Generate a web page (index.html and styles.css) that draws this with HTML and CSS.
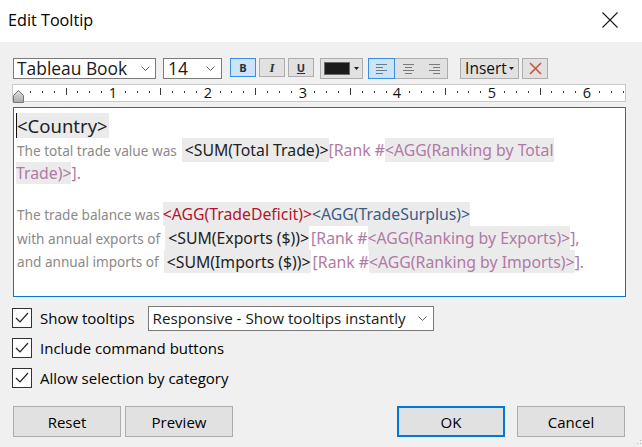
FILE: index.html
```html
<!DOCTYPE html>
<html>
<head>
<meta charset="utf-8">
<link rel="stylesheet" href="styles.css">
</head>
<body>
<div class="dialog">
  <header class="titlebar">
    <span class="title">Edit Tooltip</span>
    <svg class="close" width="16" height="16" viewBox="0 0 16 16"><path d="M0.5 0.5L15.5 15.5M15.5 0.5L0.5 15.5" stroke="#1a1a1a" stroke-width="1.1" fill="none"/></svg>
  </header>
  <main class="main">
    <div class="toolbar">
      <div class="select font-select"><span>Tableau Book</span><svg width="9" height="5" viewBox="0 0 9 5"><path d="M0.5 0.5L4.5 4.5L8.5 0.5" fill="none" stroke="#606060"/></svg></div>
      <div class="select size-select"><span>14</span><svg width="9" height="5" viewBox="0 0 9 5"><path d="M0.5 0.5L4.5 4.5L8.5 0.5" fill="none" stroke="#606060"/></svg></div>
      <div class="tbtn fmt active b-btn">B</div>
      <div class="tbtn fmt i-btn">I</div>
      <div class="tbtn fmt u-btn">U</div>
      <div class="tbtn color-btn"><span class="swatch"></span><svg width="5" height="3" viewBox="0 0 5 3"><path d="M0 0H5L2.5 3Z" fill="#222"/></svg></div>
      <div class="align-group">
        <div class="align-seg active"><svg width="11" height="11" viewBox="0 0 11 11"><path d="M0 1.5H11M0 4.5H7M0 7.5H11M0 10.5H7" stroke="#6b7a8a"/></svg></div>
        <div class="align-seg"><svg width="11" height="11" viewBox="0 0 11 11"><path d="M0 1.5H11M2 4.5H9M0 7.5H11M2 10.5H9" stroke="#7a7a7a"/></svg></div>
        <div class="align-seg"><svg width="11" height="11" viewBox="0 0 11 11"><path d="M0 1.5H11M4 4.5H11M0 7.5H11M4 10.5H11" stroke="#7a7a7a"/></svg></div>
      </div>
      <div class="tbtn insert-btn"><span>Insert</span><svg width="5" height="3" viewBox="0 0 5 3"><path d="M0 0H5L2.5 3Z" fill="#222"/></svg></div>
      <div class="tbtn del-btn"><svg width="13" height="13" viewBox="0 0 13 13"><path d="M1 1L12 12M12 1L1 12" stroke="#c9553f" stroke-width="1.6" fill="none"/></svg></div>
    </div>

    <div class="ruler">
      <svg class="ruler-scale" width="612" height="16" viewBox="0 0 612 16">
        <path stroke="#3a3a3a" stroke-width="1" fill="none" d="M17.5 6v2M29.5 6v2M41.5 6v2M64.5 6v2M76.5 6v2M88.5 6v2M112.5 6v2M124.5 6v2M136.5 6v2M159.5 6v2M171.5 6v2M183.5 6v2M207.5 6v2M218.5 6v2M230.5 6v2M254.5 6v2M266.5 6v2M278.5 6v2M301.5 6v2M313.5 6v2M325.5 6v2M349.5 6v2M361.5 6v2M373.5 6v2M396.5 6v2M408.5 6v2M420.5 6v2M444.5 6v2M455.5 6v2M467.5 6v2M491.5 6v2M503.5 6v2M515.5 6v2M538.5 6v2M550.5 6v2M562.5 6v2M586.5 6v2M598.5 6v2M610.5 6v2"/>
        <path stroke="#3a3a3a" stroke-width="1" fill="none" d="M53.5 3v7M147.5 3v7M242.5 3v7M337.5 3v7M432.5 3v7M527.5 3v7"/>
        <g class="ruler-num" text-anchor="middle">
          <text x="100" y="12.5">1</text>
          <text x="195" y="12.5">2</text>
          <text x="290" y="12.5">3</text>
          <text x="384" y="12.5">4</text>
          <text x="479" y="12.5">5</text>
          <text x="574" y="12.5">6</text>
        </g>
      </svg>
      <svg class="indent-marker" width="11" height="13" viewBox="0 0 11 13">
        <defs><linearGradient id="mk" x1="0" y1="0" x2="0" y2="1"><stop offset="0" stop-color="#e2e2e2"/><stop offset="1" stop-color="#a9a9a9"/></linearGradient></defs>
        <path d="M5.5 0.5L10.5 5.5V12.5H0.5V5.5Z" fill="url(#mk)" stroke="#767676"/>
      </svg>
    </div>

    <div class="editor">
      <div class="line l1"><span class="caret"></span><span class="fld big">&lt;Country&gt;</span></div>
      <div class="line l2"><span class="lbl gap">The total trade value was</span><span class="fld pad">&lt;SUM(Total Trade)&gt;</span><span class="pur">[Rank #</span><span class="fld pur">&lt;AGG(Ranking by Total</span></div>
      <div class="line l3"><span class="fld pur">Trade)&gt;</span><span class="pur">].</span></div>
      <div class="line l4"></div>
      <div class="line l5"><span class="lbl gap-s">The trade balance was</span><span class="fld red">&lt;AGG(TradeDeficit)&gt;</span><span class="fld blue">&lt;AGG(TradeSurplus)&gt;</span></div>
      <div class="line l6"><span class="lbl gap">with annual exports of</span><span class="fld pad">&lt;SUM(Exports ($))&gt;</span><span class="pur rk">[Rank #</span><span class="fld pur">&lt;AGG(Ranking by Exports)&gt;</span><span class="pur">],</span></div>
      <div class="line l7"><span class="lbl gap">and annual imports of</span><span class="fld pad">&lt;SUM(Imports ($))&gt;</span><span class="pur rk">[Rank #</span><span class="fld pur">&lt;AGG(Ranking by Imports)&gt;</span><span class="pur">].</span></div>
    </div>

    <div class="options">
      <div class="opt-row">
        <span class="check"><svg width="18" height="18" viewBox="0 0 18 18"><path d="M3 9L7 13L15 4" fill="none" stroke="#222" stroke-width="1.2"/></svg></span>
        <span class="opt-label">Show tooltips</span>
        <div class="select mode-select"><span>Responsive - Show tooltips instantly</span><svg width="9" height="5" viewBox="0 0 9 5"><path d="M0.5 0.5L4.5 4.5L8.5 0.5" fill="none" stroke="#606060"/></svg></div>
      </div>
      <div class="opt-row">
        <span class="check"><svg width="18" height="18" viewBox="0 0 18 18"><path d="M3 9L7 13L15 4" fill="none" stroke="#222" stroke-width="1.2"/></svg></span>
        <span class="opt-label">Include command buttons</span>
      </div>
      <div class="opt-row">
        <span class="check"><svg width="18" height="18" viewBox="0 0 18 18"><path d="M3 9L7 13L15 4" fill="none" stroke="#222" stroke-width="1.2"/></svg></span>
        <span class="opt-label">Allow selection by category</span>
      </div>
    </div>

    <div class="buttons">
      <button class="btn">Reset</button>
      <button class="btn preview">Preview</button>
      <button class="btn ok">OK</button>
      <button class="btn cancel">Cancel</button>
    </div>
  </main>
  <svg class="grip" width="7" height="7" viewBox="0 0 7 7"><path d="M5 1h1v1h-1zM5 4h1v1h-1zM2 4h1v1h-1z" fill="#b5b5b5"/></svg>
</div>
</body>
</html>
```

FILE: styles.css
```css
* { box-sizing: border-box; margin: 0; padding: 0; }
html, body { width: 642px; height: 447px; overflow: hidden; }
body {
  background: #f0f0f0;
  font-family: "Open Sans", "Noto Sans", sans-serif;
  color: #000;
}
.dialog { position: relative; width: 642px; height: 447px; }

.titlebar {
  height: 42px;
  background: #fff;
  display: flex;
  align-items: center;
  justify-content: space-between;
  padding: 0 24px 2px 8px;
}
.title { font-size: 16.2px; color: #000; }
.close { display: block; }

.main {
  display: flex;
  flex-direction: column;
  padding: 16px 16px 0 13px;
}

/* toolbar */
.toolbar { display: flex; align-items: flex-start; height: 21px; }
.select {
  display: flex;
  align-items: center;
  justify-content: space-between;
  background: #fff;
  border: 1px solid #7a7a7a;
  color: #1a1a1a;
}
.font-select { width: 143px; height: 21px; padding: 0 5px 0 3px; font-size: 17.4px; line-height: 19px; }
.size-select { width: 59px; height: 21px; margin-left: 7px; padding: 0 6px 0 4px; font-size: 17.4px; line-height: 19px; }
.tbtn {
  display: flex;
  align-items: center;
  justify-content: center;
  background: #e1e1e1;
  border: 1px solid #adadad;
  color: #222;
}
.fmt { width: 26px; height: 19px; font-size: 11px; font-weight: 700; margin-left: 3px; }
.b-btn { margin-left: 8px; }
.fmt.active { background: #cce4f7; border-color: #3c8fe0; color: #1f2d3d; }
.i-btn { font-family: "Liberation Serif", serif; font-style: italic; font-size: 13px; color: #333; }
.u-btn { text-decoration: underline; color: #2a3340; }
.color-btn { width: 43px; height: 21px; margin-left: 6px; gap: 4px; justify-content: flex-start; padding-left: 3px; }
.swatch { width: 26px; height: 13px; background: #1b1b1b; border: 1px solid #6a6a6a; }
.align-group {
  display: flex;
  width: 80px;
  height: 21px;
  margin-left: 5px;
  border: 1px solid #adadad;
  background: #e1e1e1;
}
.align-seg { flex: 1; display: flex; align-items: center; justify-content: center; }
.align-seg.active { background: #cce4f7; outline: 1px solid #3c8fe0; outline-offset: -1px; margin: -1px 0 -1px -1px; flex: 0 0 27px; }
.insert-btn { width: 59px; height: 21px; margin-left: 12px; font-size: 15.5px; gap: 2px; line-height: 19px; color: #111; }
.del-btn { width: 26px; height: 21px; margin-left: 3px; }

/* ruler */
.ruler {
  position: relative;
  width: 614px;
  height: 18px;
  margin: 5px 0 0 -1px;
  background: #fff;
  border: 1px solid #c9c9c9;
}
.ruler-scale { display: block; overflow: visible; }
.ruler-num text { font-family: "Open Sans", sans-serif; font-size: 14.5px; fill: #111; }
.indent-marker { position: absolute; left: 0; bottom: -2px; }

/* editor */
.editor {
  width: 613px;
  height: 190px;
  margin-top: 5px;
  background: #fff;
  border: 1px solid #0078d7;
  padding: 5px 0 0 2px;
  font-family: "Noto Sans", "Open Sans", sans-serif;
}
.line { display: flex; align-items: stretch; white-space: pre; }
.line > span { display: flex; align-items: center; }
.l1 { height: 25px; }
.l2 { height: 24px; }
.l3 { height: 22px; }
.l4 { height: 18px; }
.l5 { height: 24px; }
.l6 { height: 24px; }
.l7 { height: 23px; }
.caret { width: 1px; background: #111; }
.lbl { font-size: 13.6px; color: #8a8a8a; padding-left: 1px; }
.gap { margin-right: 5px; }
.gap-s { margin-right: 3px; }
.fld { background: #ebebeb; font-size: 15.8px; color: #222; }
.fld.pad { padding-left: 3px; }
.big { font-size: 18.5px; color: #222; padding-right: 1px; }
.pur { color: #b07aa3; font-size: 15.8px; }
.red { color: #b3152c; }
.blue { color: #3a5b87; }
.rk { margin-left: 2px; }

/* options */
.options { display: flex; flex-direction: column; margin-top: 6px; }
.opt-row { display: flex; align-items: center; height: 30px; }
.check {
  display: flex;
  align-items: center;
  justify-content: center;
  width: 20px;
  height: 20px;
  margin-left: -1px;
  background: #fff;
  border: 1px solid #333;
}
.opt-label { font-size: 15px; margin-left: 8px; color: #000; }
.mode-select { width: 286px; height: 25px; margin-left: 13px; padding: 0 6px 0 4px; font-size: 15.2px; }

/* buttons */
.buttons { display: flex; margin-top: 13px; }
.btn {
  width: 108px;
  height: 31px;
  background: #e1e1e1;
  border: 1px solid #adadad;
  font-family: "Open Sans", "Noto Sans", sans-serif;
  font-size: 15px;
  color: #000;
}
.preview { margin-left: 4px; }
.ok { margin-left: auto; border: 1px solid #0078d7; box-shadow: inset 0 0 0 1px #0078d7; }
.cancel { margin-left: 12px; margin-right: 1px; }

.grip { position: absolute; right: 0; bottom: 1px; }
```
